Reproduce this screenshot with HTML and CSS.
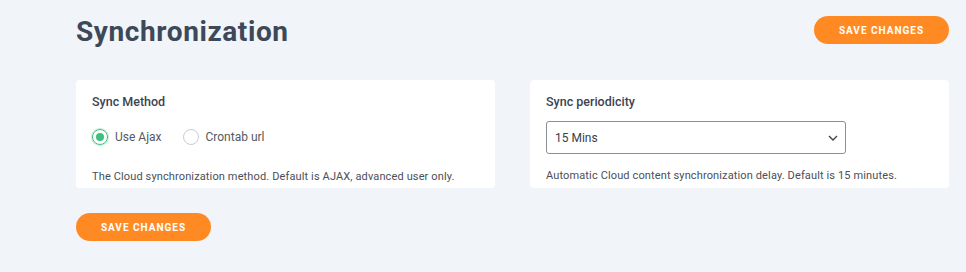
FILE: index.html
```html
<!DOCTYPE html>
<html lang="en">
  <head>
    <meta charset="UTF-8" />
    <title>Synchronization</title>
    <meta name="viewport" content="width=device-width, initial-scale=1.0" />
    <link rel="stylesheet" href="styles.css">
  </head>
  <body>
    <div class="page-header">
      <h1>Synchronization</h1>
      <button class="save-btn">Save changes</button>
    </div>

    <div class="cards">
      <div class="card">
        <h3 class="method-title">Sync Method</h3>
        <div class="radio-row">
          <label class="radio checked"><span class="dot"></span>Use Ajax</label>
          <label class="radio"><span class="dot"></span>Crontab url</label>
        </div>
        <p class="hint">The Cloud synchronization method. Default is AJAX, advanced user only.</p>
      </div>

      <div class="card">
        <h3>Sync periodicity</h3>
        <div class="select">
          <span>15 Mins</span>
          <svg width="10" height="6" viewBox="0 0 10 6"><path d="M1 1l4 4 4-4" fill="none" stroke="#444" stroke-width="1.4"/></svg>
        </div>
        <p class="hint">Automatic Cloud content synchronization delay. Default is 15 minutes.</p>
      </div>
    </div>

    <button class="save-btn">Save changes</button>
  </body>
</html>
```

FILE: styles.css
```css
body {
  font-family: Roboto, 'Liberation Sans', sans-serif;
  background-color: #f1f4f9;
  margin: 0;
  padding: 16px 17px 0 76px;
  color: #3a3f48;
}

.page-header {
  display: flex;
  justify-content: space-between;
  align-items: flex-start;
  height: 64px;
}

h1 {
  margin: 0;
  font-size: 28px;
  font-weight: 700;
  letter-spacing: 0.6px;
  color: #3d4858;
  line-height: 32px;
}

.save-btn {
  width: 135px;
  height: 28px;
  background: #ff8a24;
  color: white;
  border: none;
  border-radius: 14px;
  font-family: Roboto, sans-serif;
  font-size: 10px;
  font-weight: 700;
  letter-spacing: 1px;
  text-transform: uppercase;
  cursor: pointer;
}

.cards {
  display: flex;
  gap: 35px;
  margin-bottom: 25px;
}

.card {
  background: white;
  border-radius: 4px;
  width: 419px;
  height: 108px;
  box-sizing: border-box;
  padding: 14px 16px 0;
}

.card h3 {
  margin: 0 0 11px;
  font-size: 12.5px;
  font-weight: 500;
  color: #3d4450;
  line-height: 16px;
}

.card h3.method-title {
  margin-bottom: 19px;
}

.radio-row {
  display: flex;
  gap: 21px;
  height: 16px;
  margin-bottom: 25px;
}

.radio {
  display: flex;
  align-items: center;
  gap: 7px;
  font-size: 12px;
  color: #555a62;
}

.dot {
  width: 14px;
  height: 14px;
  border: 1px solid #c9cdd3;
  border-radius: 50%;
  display: inline-block;
  position: relative;
}

.radio.checked .dot {
  border-color: #3fbf7f;
  box-shadow: 0 0 0 1px #c6ecd8;
}

.radio.checked .dot::after {
  content: '';
  position: absolute;
  top: 3px;
  left: 3px;
  width: 8px;
  height: 8px;
  border-radius: 50%;
  background: #3fbf7f;
}

.select {
  width: 300px;
  height: 33px;
  box-sizing: border-box;
  border: 1px solid #8a8f96;
  border-radius: 3px;
  display: flex;
  align-items: center;
  justify-content: space-between;
  padding: 0 7px 0 8px;
  font-size: 12px;
  color: #3a3f48;
  margin-bottom: 15px;
}

.hint {
  margin: 0;
  font-size: 11px;
  letter-spacing: 0.13px;
  color: #4a4f57;
  line-height: 14px;
}
```
